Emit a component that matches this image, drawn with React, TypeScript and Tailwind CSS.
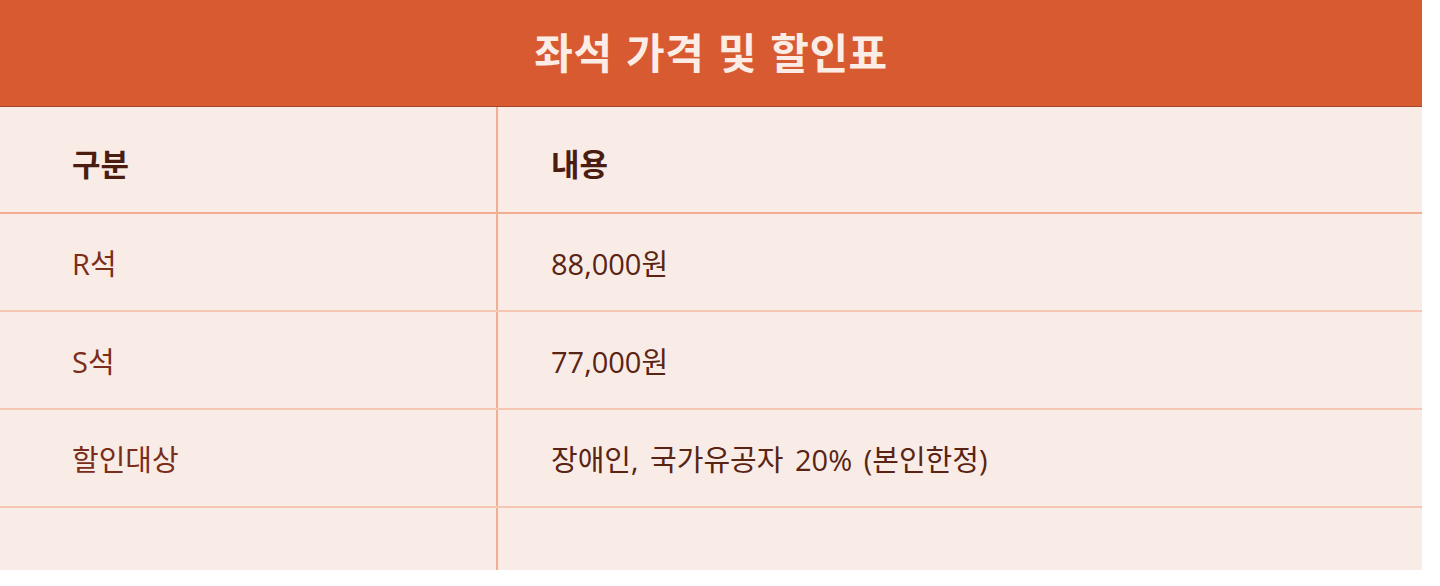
const rows = [
  { label: "R석", value: "88,000원" },
  { label: "S석", value: "77,000원" },
  { label: "할인대상", value: "장애인, 국가유공자 20% (본인한정)" },
  { label: "", value: "" },
];

const App = () => {
  return (
    <div
      className="w-[1440px] h-[586px] bg-white"
      style={{ fontFamily: '"Open Sans", "Noto Sans CJK KR", sans-serif' }}
    >
      <div className="w-[1422px] bg-[#f9ece7]">
        {/* Title */}
        <div className="h-[107px] bg-[#d85a31] border-b border-[#a9432a] flex items-center justify-center">
          <h1 className="text-[42px] font-bold text-[#fbece6] leading-none tracking-[0.5px] [word-spacing:2px]">
            좌석 가격 및 할인표
          </h1>
        </div>

        {/* Header row */}
        <div className="flex h-[107px] border-b-2 border-[#f2ad92]">
          <div className="w-[498px] border-r-2 border-[#f2ad92] flex items-center pl-[72px] pt-[10px]">
            <span className="text-[31px] font-bold text-[#4b1d10]">구분</span>
          </div>
          <div className="flex-1 flex items-center pl-[53px] pt-[10px]">
            <span className="text-[31px] font-bold text-[#4b1d10]">내용</span>
          </div>
        </div>

        {/* Body rows */}
        {rows.map((row, i) => (
          <div
            key={i}
            className={
              i === rows.length - 1
                ? "flex h-[62px]"
                : "flex h-[98px] border-b-2 border-[#f7c6b3]"
            }
          >
            <div className="w-[498px] border-r-2 border-[#f2ad92] flex items-center pl-[72px] pt-[4px]">
              <span className="text-[29px] text-[#7a2d19]">{row.label}</span>
            </div>
            <div className="flex-1 flex items-center pl-[53px] pt-[4px]">
              <span className="text-[29px] text-[#5a2414] [word-spacing:4px]">{row.value}</span>
            </div>
          </div>
        ))}
      </div>
    </div>
  );
};

export default App;
